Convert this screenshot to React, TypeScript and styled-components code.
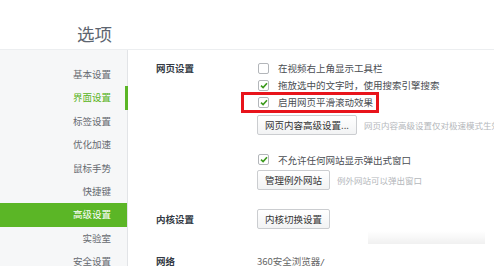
import React from 'react'
import styled, { createGlobalStyle } from 'styled-components'

const GlobalStyle = createGlobalStyle`
  html, body {
    margin: 0;
    padding: 0;
    background: #fff;
  }
  body {
    font-family: 'Noto Sans CJK SC', 'Noto Sans', sans-serif;
  }
`

const Page = styled.div`
  position: relative;
  width: 494px;
  height: 266px;
  overflow: hidden;
  display: flex;
  flex-direction: column;
  background: #fff;
`

const Header = styled.div`
  height: 50px;
  flex: none;
  box-sizing: border-box;
  padding: 23px 0 0 77px;
  border-bottom: 1px solid #eceef0;
`

const Title = styled.h1`
  margin: 0;
  font-size: 17.5px;
  line-height: 22px;
  font-weight: normal;
  color: #5d6570;
`

const Body = styled.div`
  flex: 1;
  display: flex;
  min-height: 0;
`

const Sidebar = styled.nav`
  width: 127px;
  flex: none;
  background: #f6f7f8;
  border-right: 1px solid #e2e4e7;
  padding-top: 13px;
`

const NavItem = styled.div<{ $current?: boolean; $hover?: boolean }>`
  position: relative;
  height: 23.4px;
  line-height: 23.4px;
  padding-right: 16px;
  text-align: right;
  font-size: 9.5px;
  color: ${(p) => (p.$hover ? '#fff' : p.$current ? '#56b320' : '#666a70')};
  background: ${(p) => (p.$hover ? '#5bb626' : 'transparent')};

  &::after {
    content: '';
    display: ${(p) => (p.$current ? 'block' : 'none')};
    position: absolute;
    right: -1px;
    top: 0;
    width: 3px;
    height: 24px;
    background: #5bb626;
  }
`

const Content = styled.main`
  flex: 1;
  padding: 9.5px 0 0 28px;
  color: #444;
`

const Section = styled.section<{ $gap?: number }>`
  display: grid;
  grid-template-columns: 101px 1fr;
  margin-top: ${(p) => p.$gap || 0}px;
`

const SectionLabel = styled.div<{ $lh?: number }>`
  font-size: 9.5px;
  font-weight: bold;
  color: #333a44;
  line-height: ${(p) => p.$lh || 17}px;
`

const Options = styled.div`
  display: flex;
  flex-direction: column;
`

const OptionRow = styled.label<{ $marked?: boolean; $gap?: number }>`
  position: relative;
  display: flex;
  align-items: center;
  height: 17px;
  margin-top: ${(p) => p.$gap || 0}px;
  font-size: 9.5px;
  color: #4a4d52;
  white-space: nowrap;

  &::before {
    content: '';
    display: ${(p) => (p.$marked ? 'block' : 'none')};
    position: absolute;
    left: -16px;
    top: -2px;
    width: 132px;
    height: 15px;
    border: 3px solid #e8141b;
  }
`

const Box = styled.span`
  width: 9px;
  height: 9px;
  flex: none;
  margin: 0 9px 0 1px;
  border: 1px solid #b3b6ba;
  border-radius: 2px;
  background: #fff;
  display: flex;
  align-items: center;
  justify-content: center;
`

const ButtonRow = styled.div<{ $gap?: number }>`
  display: flex;
  align-items: center;
  margin-top: ${(p) => p.$gap || 0}px;
  white-space: nowrap;
`

const Button = styled.button`
  height: 20px;
  padding: 0 7px;
  box-sizing: border-box;
  border: 1px solid #cbcdd0;
  border-radius: 2px;
  background: linear-gradient(#ffffff, #f2f3f4);
  font-family: inherit;
  font-size: 9.5px;
  color: #333;
  line-height: 18px;
`

const Hint = styled.span`
  margin-left: 7px;
  font-size: 8.5px;
  color: #b4b7bb;
`

const PlainText = styled.div`
  font-size: 9.5px;
  line-height: 17px;
  color: #666;
`

const Popup = styled.div`
  position: absolute;
  left: 323px;
  top: 244px;
  width: 162px;
  height: 40px;
  background: #fff;

  &::before {
    content: '';
    position: absolute;
    left: 45px;
    right: 0;
    top: -13px;
    height: 13px;
    background: linear-gradient(rgba(0, 0, 0, 0), rgba(0, 0, 0, 0.06));
  }
`

const Cursor = styled.span`
  position: absolute;
  left: 320px;
  top: 255px;
  font-size: 10px;
  color: #333;
  transform: skewX(-10deg);
`

const Check = () => (
  <svg width="8" height="7" viewBox="0 0 8 7">
    <path d="M1 3.6 L3.1 5.6 L7 1.2" fill="none" stroke="#3c9a1d" strokeWidth="1.6" />
  </svg>
)

type CheckOptionProps = {
  checked?: boolean
  marked?: boolean
  gap?: number
  children: React.ReactNode
}

const CheckOption = ({ checked, marked, gap, children }: CheckOptionProps) => (
  <OptionRow $marked={marked} $gap={gap}>
    <Box>{checked && <Check />}</Box>
    {children}
  </OptionRow>
)

const navItems = ['基本设置', '界面设置', '标签设置', '优化加速', '鼠标手势', '快捷键', '高级设置', '实验室', '安全设置']

const App = () => (
  <>
    <GlobalStyle />
    <Page>
      <Header>
        <Title>选项</Title>
      </Header>
      <Body>
        <Sidebar>
          {navItems.map((item) => (
            <NavItem key={item} $current={item === '界面设置'} $hover={item === '高级设置'}>
              {item}
            </NavItem>
          ))}
        </Sidebar>
        <Content>
          <Section>
            <SectionLabel>网页设置</SectionLabel>
            <Options>
              <CheckOption>在视频右上角显示工具栏</CheckOption>
              <CheckOption checked>拖放选中的文字时，使用搜索引擎搜索</CheckOption>
              <CheckOption checked marked>
                启用网页平滑滚动效果
              </CheckOption>
              <ButtonRow $gap={4.5}>
                <Button>网页内容高级设置...</Button>
                <Hint>网页内容高级设置仅对极速模式生效</Hint>
              </ButtonRow>
              <CheckOption checked gap={16}>
                不允许任何网站显示弹出式窗口
              </CheckOption>
              <ButtonRow $gap={1.5}>
                <Button>管理例外网站</Button>
                <Hint>例外网站可以弹出窗口</Hint>
              </ButtonRow>
            </Options>
          </Section>
          <Section $gap={19}>
            <SectionLabel $lh={20}>内核设置</SectionLabel>
            <ButtonRow>
              <Button>内核切换设置</Button>
            </ButtonRow>
          </Section>
          <Section $gap={24}>
            <SectionLabel>网络</SectionLabel>
            <PlainText>360安全浏览器</PlainText>
          </Section>
        </Content>
      </Body>
      <Popup />
      <Cursor>/</Cursor>
    </Page>
  </>
)

export default App
